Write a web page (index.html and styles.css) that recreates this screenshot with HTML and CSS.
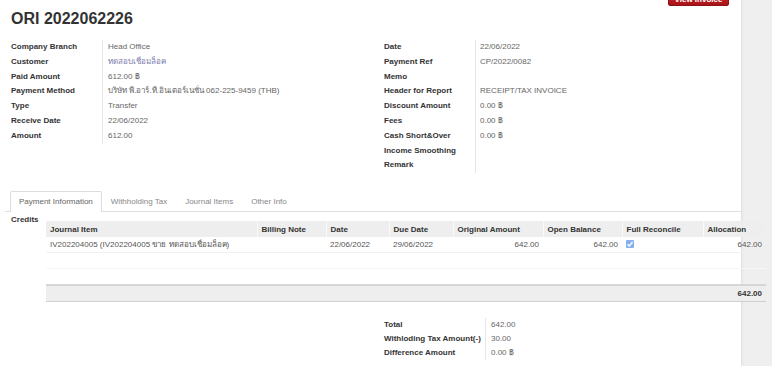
FILE: index.html
```html
<!DOCTYPE html>
<html lang="th">
<head>
    <meta charset="UTF-8">
    <meta name="viewport" content="width=device-width, initial-scale=1.0">
    <title>ORI 2022062226</title>
    <link rel="stylesheet" href="styles.css">
</head>
<body>
    <div class="sheet">
        <div class="statusbar">
            <button class="btn-invoice">View Invoice</button>
        </div>

        <h1 class="title">ORI 2022062226</h1>

        <div class="groups">
            <div class="group">
                <div class="label">Company Branch</div><div class="value">Head Office</div>
                <div class="label">Customer</div><div class="value link">ทดสอบเชื่อมล็อค</div>
                <div class="label">Paid Amount</div><div class="value">612.00 ฿</div>
                <div class="label">Payment Method</div><div class="value">บริษัท พี.อาร์.ที.อินเตอร์เนชั่น 062-225-9459 (THB)</div>
                <div class="label">Type</div><div class="value">Transfer</div>
                <div class="label">Receive Date</div><div class="value">22/06/2022</div>
                <div class="label">Amount</div><div class="value">612.00</div>
            </div>
            <div class="group">
                <div class="label">Date</div><div class="value">22/06/2022</div>
                <div class="label">Payment Ref</div><div class="value">CP/2022/0082</div>
                <div class="label">Memo</div><div class="value"></div>
                <div class="label">Header for Report</div><div class="value">RECEIPT/TAX INVOICE</div>
                <div class="label">Discount Amount</div><div class="value">0.00 ฿</div>
                <div class="label">Fees</div><div class="value">0.00 ฿</div>
                <div class="label">Cash Short&amp;Over</div><div class="value">0.00 ฿</div>
                <div class="label">Income Smoothing</div><div class="value"></div>
                <div class="label">Remark</div><div class="value"></div>
            </div>
        </div>

        <ul class="tabs">
            <li class="tab active">Payment Information</li>
            <li class="tab">Withholding Tax</li>
            <li class="tab">Journal Items</li>
            <li class="tab">Other Info</li>
        </ul>

        <div class="credits">
            <div class="credits-label">Credits</div>
            <table class="lines">
                <colgroup>
                    <col style="width: 211px">
                    <col style="width: 69px">
                    <col style="width: 63px">
                    <col style="width: 64px">
                    <col style="width: 90px">
                    <col style="width: 79px">
                    <col style="width: 81px">
                    <col style="width: 63px">
                </colgroup>
                <thead>
                    <tr>
                        <th>Journal Item</th>
                        <th>Billing Note</th>
                        <th>Date</th>
                        <th>Due Date</th>
                        <th>Original Amount</th>
                        <th>Open Balance</th>
                        <th>Full Reconcile</th>
                        <th>Allocation</th>
                    </tr>
                </thead>
                <tbody>
                    <tr>
                        <td>IV202204005 (IV202204005 ขาย ทดสอบเชื่อมล็อค)</td>
                        <td></td>
                        <td>22/06/2022</td>
                        <td>29/06/2022</td>
                        <td class="num">642.00</td>
                        <td class="num">642.00</td>
                        <td><span class="check"><svg viewBox="0 0 8 8" width="8" height="8"><path d="M1.5 4.2 L3.3 6 L6.6 2" fill="none" stroke="#fff" stroke-width="1.3"/></svg></span></td>
                        <td class="num">642.00</td>
                    </tr>
                    <tr class="empty"><td colspan="8"></td></tr>
                    <tr class="empty"><td colspan="8"></td></tr>
                </tbody>
                <tfoot>
                    <tr>
                        <td colspan="7"></td>
                        <td class="num">642.00</td>
                    </tr>
                </tfoot>
            </table>
        </div>

        <div class="totals">
            <div class="totals-group">
                <div class="label">Total</div><div class="value">642.00</div>
                <div class="label">Withloding Tax Amount(-)</div><div class="value">30.00</div>
                <div class="label">Difference Amount</div><div class="value">0.00 ฿</div>
            </div>
        </div>
    </div>
</body>
</html>
```

FILE: styles.css
```css
body {
    margin: 0;
    background: #efefef;
    font-family: 'Liberation Sans', Arial, sans-serif;
    font-size: 8px;
    color: #555;
    overflow: hidden;
}

.sheet {
    width: 730px;
    min-height: 366px;
    padding-left: 11px;
    background: #fff;
    box-shadow: 1px 0 2px rgba(0, 0, 0, 0.08);
}

.statusbar {
    height: 6px;
    overflow: hidden;
    display: flex;
    justify-content: flex-end;
    align-items: flex-end;
    padding-right: 12px;
}

.btn-invoice {
    width: 61px;
    height: 12px;
    line-height: 8px;
    border: 1px solid #8e1014;
    border-radius: 2px;
    background: linear-gradient(#c4262b, #a91418);
    color: #fff;
    font-family: inherit;
    font-size: 8px;
    font-weight: bold;
    padding: 0;
}

.title {
    margin: 2px 0 0;
    font-size: 16px;
    line-height: 22px;
    font-weight: bold;
    color: #333;
}

.groups {
    display: grid;
    grid-template-columns: 373px 1fr;
    margin-top: 10px;
}

.group {
    display: grid;
    grid-template-columns: 92px 1fr;
    grid-auto-rows: 14.8px;
    align-content: start;
}

.label {
    font-weight: bold;
    color: #333;
    line-height: 14.8px;
    border-right: 1px solid #e6e6e6;
    white-space: nowrap;
}

.value {
    line-height: 14.8px;
    padding-left: 5px;
    color: #666;
    white-space: nowrap;
}

.group:last-child .value {
    padding-left: 4px;
}

.link {
    color: #7c7bad;
}

.tabs {
    list-style: none;
    display: flex;
    margin: 18px 0 0 -6px;
    padding: 0 0 0 5px;
    border-bottom: 1px solid #ddd;
}

.tab {
    height: 19px;
    line-height: 19px;
    padding: 0 8px;
    border: 1px solid transparent;
    border-bottom: none;
    margin-bottom: -1px;
    color: #888;
    border-radius: 2px 2px 0 0;
}

.tab.active {
    border-color: #ddd;
    background: #fff;
    height: 20px;
    color: #666;
}

.credits {
    display: flex;
    align-items: flex-start;
    margin-top: 2px;
}

.credits-label {
    width: 35px;
    flex: none;
    font-weight: bold;
    color: #333;
    line-height: 12px;
}

.lines {
    margin-top: 7px;
    width: 720px;
    flex: none;
    border-collapse: collapse;
    table-layout: fixed;
}

.lines th {
    background: #eee;
    height: 16px;
    padding: 0 4px;
    text-align: left;
    font-weight: bold;
    color: #333;
    border-left: 1px solid #fafafa;
    white-space: nowrap;
}

.lines th:first-child {
    border-left: none;
}

.lines td {
    height: 15px;
    padding: 0 4px;
    border-bottom: 1px solid #f0f0f0;
    white-space: nowrap;
    color: #555;
}

.lines td.num {
    text-align: right;
}

.lines tr.empty td {
    height: 15px;
    border-bottom-color: #f6f6f6;
}

.check {
    display: inline-block;
    width: 8px;
    height: 8px;
    background: #86b1ee;
    border-radius: 1px;
    vertical-align: -1px;
}

.check svg {
    display: block;
}

.lines tfoot td {
    background: #eee;
    height: 15px;
    border-top: 2px solid #d6d6d6;
    border-bottom: 1px solid #d0d0d0;
    font-weight: bold;
    color: #333;
}

.totals {
    display: grid;
    grid-template-columns: 373px 1fr;
    margin-top: 16px;
}

.totals-group {
    grid-column: 2;
    display: grid;
    grid-template-columns: 102px 1fr;
    grid-auto-rows: 14px;
    padding: 0 0 6px;
}

.totals-group .label,
.totals-group .value {
    line-height: 14px;
}
```
